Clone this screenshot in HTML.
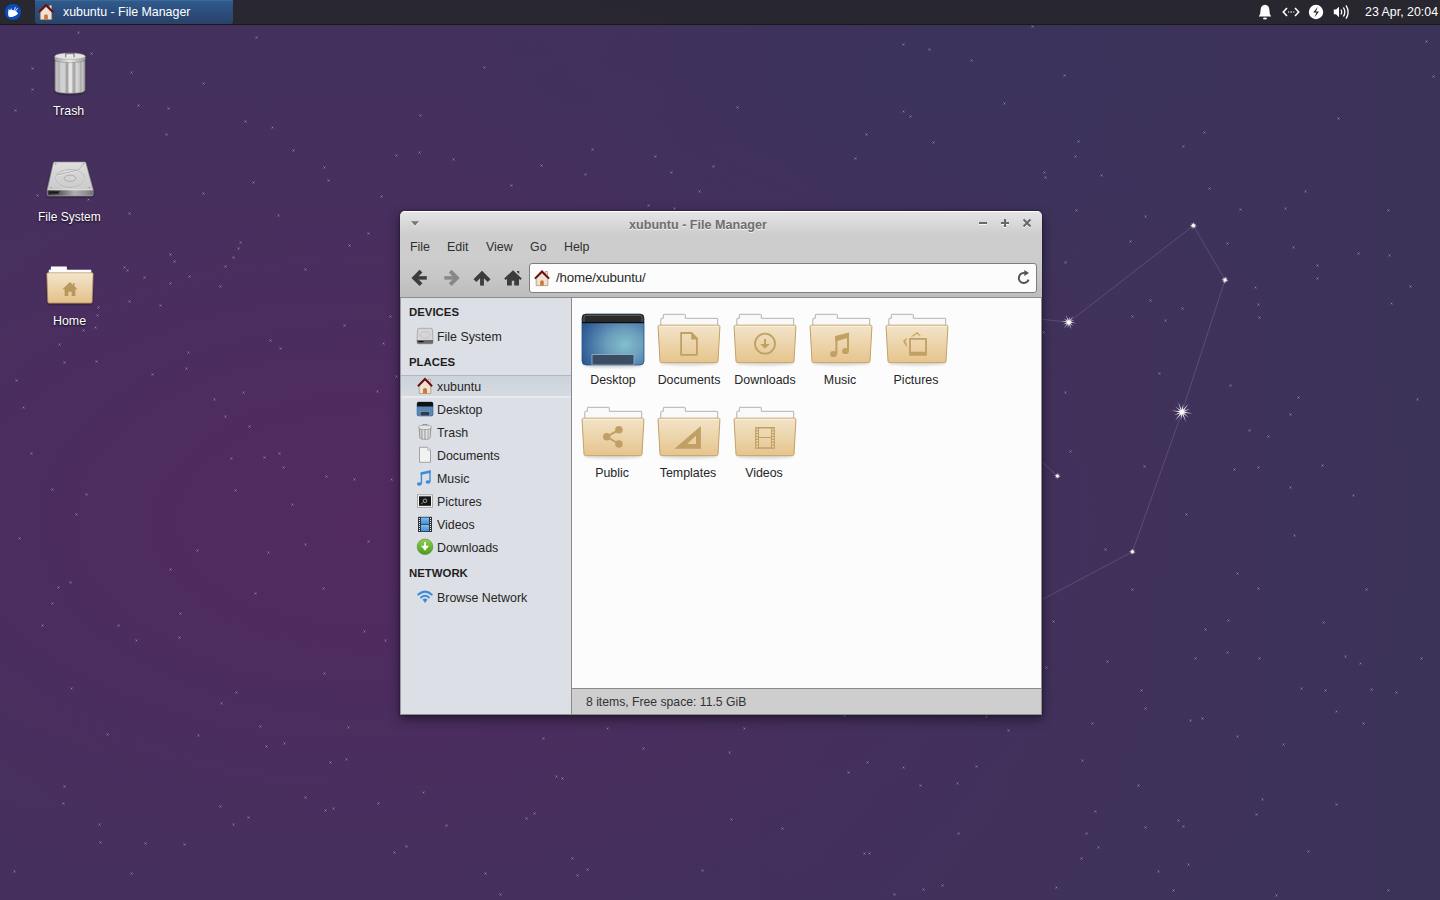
<!DOCTYPE html>
<html><head><meta charset="utf-8">
<style>
*{box-sizing:border-box;margin:0;padding:0}
html,body{width:1440px;height:900px;overflow:hidden}
body{position:relative;font-family:"Liberation Sans",sans-serif;
background:
 radial-gradient(ellipse 470px 300px at 910px 70px, rgba(50,55,95,0.3) 0%, rgba(50,55,95,0.22) 35%, rgba(50,55,95,0.08) 70%, rgba(50,55,95,0) 100%),
 radial-gradient(ellipse 1140px 660px at 380px 520px, rgba(106,32,103,0.360) 0.0%, rgba(106,32,103,0.349) 8.3%, rgba(106,32,103,0.318) 16.7%, rgba(106,32,103,0.272) 25.0%, rgba(106,32,103,0.218) 33.3%, rgba(106,32,103,0.165) 41.7%, rgba(106,32,103,0.117) 50.0%, rgba(106,32,103,0.078) 58.3%, rgba(106,32,103,0.049) 66.7%, rgba(106,32,103,0.029) 75.0%, rgba(106,32,103,0.016) 83.3%, rgba(106,32,103,0.008) 91.7%, rgba(106,32,103,0.000) 100.0%),
 linear-gradient(90deg,#43315d 0%,#41315c 50%,#3c3359 100%);
}
.t{position:absolute;white-space:nowrap;line-height:1}
svg.full{position:absolute;left:0;top:0;width:1440px;height:900px}
#panel{position:absolute;left:0;top:0;width:1440px;height:25px;background:rgba(39,38,45,0.94);border-bottom:1px solid #19181d}
#task{position:absolute;left:35px;top:0;width:198px;height:24px;border-radius:0 0 3px 3px;
 background:linear-gradient(#4a73a0 0px,#2f5b8c 1px,#2c5080 40%,#2a4268 100%)}
.dlabel{position:absolute;color:#fff;font-size:12.4px;line-height:1;white-space:nowrap;text-shadow:0 1px 2px rgba(0,0,0,.9)}
#win{position:absolute;left:400px;top:210px;width:642px;height:505px}
#winbg{position:absolute;left:0;top:1px;width:642px;height:504px;border-radius:5px 5px 0 0;background:#cecece;border:1px solid #8e8e8e;border-top:0;box-shadow:0 0 1px 1px rgba(30,20,40,.35),0 4px 12px rgba(0,0,0,.5)}
#chrome{position:absolute;left:0;top:1px;width:642px;height:87px;border-radius:5px 5px 0 0;
 background:linear-gradient(#ffffff 0px,#ffffff 1px,#e4e4e4 1px,#cdcdcd 24px,#cdcdcd 47px,#c9c9c9 59px,#bdbdbd 86px,#8c8c8c 86px,#8c8c8c 87px)}
#loc{position:absolute;left:129px;top:53px;width:508px;height:30px;background:#fcfcfc;border:1px solid #7e7e7e;border-radius:3px}
#side{position:absolute;left:0;top:88px;width:171px;height:416px;background:#dcdfe5;border-left:1px solid #9a9a9a}
#sel{position:absolute;left:1px;top:165px;width:170px;height:23px;background:linear-gradient(#b3b6bb 0,#b3b6bb 1px,#cdd3db 1px,#d6dbe2 21px,#e8eaee 21px,#e8eaee 23px)}
#vsep{position:absolute;left:171px;top:88px;width:1px;height:416px;background:#8a8a8a}
#content{position:absolute;left:172px;top:88px;width:469px;height:390px;background:#fcfcfc}
#status{position:absolute;left:172px;top:478px;width:469px;height:26px;background:#cecece;border-top:1px solid #8a8a8a}
.sh{position:absolute;font-weight:bold;font-size:11.4px;color:#1e1e1e;line-height:1;white-space:nowrap}
.si{position:absolute;font-size:12.4px;color:#262626;line-height:1;white-space:nowrap}
.fl{position:absolute;font-size:12.4px;color:#262626;line-height:1;white-space:nowrap;text-align:center;width:90px}
.mi{position:absolute;font-size:12.4px;color:#303030;line-height:1;white-space:nowrap}
</style></head><body>
<svg class="full" id="bg" viewBox="0 0 1440 900">
 <g stroke="rgba(215,195,235,0.22)" stroke-width="0.85" fill="none">
  <polyline points="1030,318 1068.7,322.2 1193.4,225.6 1225,280 1182,412 1132.4,551.8 1030,606"/>
  <line x1="1030" y1="451" x2="1057.4" y2="476"/>
 </g>
<path d="M77.0,31.0l3,3m0,-3l-3,3M90.0,52.0l3,3m0,-3l-3,3M31.0,67.0l3,3m0,-3l-3,3M31.0,88.0l3,3m0,-3l-3,3M14.0,109.0l3,3m0,-3l-3,3M130.0,71.0l3,3m0,-3l-3,3M137.0,104.0l3,3m0,-3l-3,3M167.0,107.0l3,3m0,-3l-3,3M202.0,82.0l3,3m0,-3l-3,3M255.0,36.0l3,3m0,-3l-3,3M244.0,120.0l3,3m0,-3l-3,3M271.0,126.0l3,3m0,-3l-3,3M165.0,133.0l3,3m0,-3l-3,3M292.0,149.0l3,3m0,-3l-3,3M323.0,166.0l3,3m0,-3l-3,3M327.0,179.0l3,3m0,-3l-3,3M395.0,154.0l3,3m0,-3l-3,3M252.0,181.0l3,3m0,-3l-3,3M202.0,192.0l3,3m0,-3l-3,3M380.0,195.0l3,3m0,-3l-3,3M36.0,194.0l3,3m0,-3l-3,3M87.0,198.0l3,3m0,-3l-3,3M128.0,212.0l3,3m0,-3l-3,3M277.0,214.0l3,3m0,-3l-3,3M367.0,232.0l3,3m0,-3l-3,3M348.0,244.0l3,3m0,-3l-3,3M239.0,241.0l3,3m0,-3l-3,3M237.0,247.0l3,3m0,-3l-3,3M232.0,256.0l3,3m0,-3l-3,3M169.0,253.0l3,3m0,-3l-3,3M173.0,260.0l3,3m0,-3l-3,3M224.0,265.0l3,3m0,-3l-3,3M304.0,268.0l3,3m0,-3l-3,3M123.0,266.0l3,3m0,-3l-3,3M126.0,269.0l3,3m0,-3l-3,3M143.0,276.0l3,3m0,-3l-3,3M188.0,275.0l3,3m0,-3l-3,3M169.0,282.0l3,3m0,-3l-3,3M219.0,285.0l3,3m0,-3l-3,3M128.0,300.0l3,3m0,-3l-3,3M159.0,304.0l3,3m0,-3l-3,3M97.0,306.0l3,3m0,-3l-3,3M96.0,314.0l3,3m0,-3l-3,3M94.0,326.0l3,3m0,-3l-3,3M82.0,329.0l3,3m0,-3l-3,3M58.0,343.0l3,3m0,-3l-3,3M63.0,361.0l3,3m0,-3l-3,3M95.0,360.0l3,3m0,-3l-3,3M187.0,351.0l3,3m0,-3l-3,3M185.0,367.0l3,3m0,-3l-3,3M151.0,373.0l3,3m0,-3l-3,3M269.0,339.0l3,3m0,-3l-3,3M279.0,347.0l3,3m0,-3l-3,3M343.0,324.0l3,3m0,-3l-3,3M389.0,315.0l3,3m0,-3l-3,3M382.0,342.0l3,3m0,-3l-3,3M395.0,375.0l3,3m0,-3l-3,3M376.0,390.0l3,3m0,-3l-3,3M15.0,379.0l3,3m0,-3l-3,3M22.0,406.0l3,3m0,-3l-3,3M242.0,391.0l3,3m0,-3l-3,3M213.0,398.0l3,3m0,-3l-3,3M224.0,415.0l3,3m0,-3l-3,3M248.0,425.0l3,3m0,-3l-3,3M30.0,452.0l3,3m0,-3l-3,3M230.0,457.0l3,3m0,-3l-3,3M263.0,456.0l3,3m0,-3l-3,3M278.0,452.0l3,3m0,-3l-3,3M282.0,466.0l3,3m0,-3l-3,3M325.0,475.0l3,3m0,-3l-3,3M353.0,478.0l3,3m0,-3l-3,3M390.0,478.0l3,3m0,-3l-3,3M51.0,488.0l3,3m0,-3l-3,3M85.0,493.0l3,3m0,-3l-3,3M234.0,489.0l3,3m0,-3l-3,3M291.0,503.0l3,3m0,-3l-3,3M75.0,513.0l3,3m0,-3l-3,3M18.0,537.0l3,3m0,-3l-3,3M196.0,549.0l3,3m0,-3l-3,3M267.0,551.0l3,3m0,-3l-3,3M304.0,543.0l3,3m0,-3l-3,3M367.0,540.0l3,3m0,-3l-3,3M169.0,568.0l3,3m0,-3l-3,3M69.0,581.0l3,3m0,-3l-3,3M57.0,586.0l3,3m0,-3l-3,3M51.0,602.0l3,3m0,-3l-3,3M254.0,592.0l3,3m0,-3l-3,3M322.0,587.0l3,3m0,-3l-3,3M179.0,612.0l3,3m0,-3l-3,3M41.0,624.0l3,3m0,-3l-3,3M117.0,624.0l3,3m0,-3l-3,3M135.0,639.0l3,3m0,-3l-3,3M178.0,636.0l3,3m0,-3l-3,3M363.0,630.0l3,3m0,-3l-3,3M384.0,639.0l3,3m0,-3l-3,3M323.0,672.0l3,3m0,-3l-3,3M70.0,687.0l3,3m0,-3l-3,3M235.0,691.0l3,3m0,-3l-3,3M220.0,702.0l3,3m0,-3l-3,3M259.0,725.0l3,3m0,-3l-3,3M347.0,726.0l3,3m0,-3l-3,3M106.0,733.0l3,3m0,-3l-3,3M197.0,734.0l3,3m0,-3l-3,3M265.0,745.0l3,3m0,-3l-3,3M283.0,742.0l3,3m0,-3l-3,3M329.0,761.0l3,3m0,-3l-3,3M345.0,758.0l3,3m0,-3l-3,3M63.0,785.0l3,3m0,-3l-3,3M62.0,802.0l3,3m0,-3l-3,3M98.0,823.0l3,3m0,-3l-3,3M99.0,841.0l3,3m0,-3l-3,3M144.0,842.0l3,3m0,-3l-3,3M183.0,843.0l3,3m0,-3l-3,3M219.0,805.0l3,3m0,-3l-3,3M232.0,823.0l3,3m0,-3l-3,3M247.0,816.0l3,3m0,-3l-3,3M304.0,796.0l3,3m0,-3l-3,3M324.0,809.0l3,3m0,-3l-3,3M332.0,807.0l3,3m0,-3l-3,3M377.0,802.0l3,3m0,-3l-3,3M422.0,791.0l3,3m0,-3l-3,3M445.0,824.0l3,3m0,-3l-3,3M393.0,851.0l3,3m0,-3l-3,3M405.0,845.0l3,3m0,-3l-3,3M13.0,870.0l3,3m0,-3l-3,3M130.0,872.0l3,3m0,-3l-3,3M484.0,872.0l3,3m0,-3l-3,3M499.0,893.0l3,3m0,-3l-3,3M542.0,737.0l3,3m0,-3l-3,3M606.0,727.0l3,3m0,-3l-3,3M642.0,747.0l3,3m0,-3l-3,3M743.0,727.0l3,3m0,-3l-3,3M728.0,751.0l3,3m0,-3l-3,3M843.0,714.0l3,3m0,-3l-3,3M985.0,715.0l3,3m0,-3l-3,3M1007.0,729.0l3,3m0,-3l-3,3M555.0,775.0l3,3m0,-3l-3,3M561.0,777.0l3,3m0,-3l-3,3M533.0,812.0l3,3m0,-3l-3,3M525.0,817.0l3,3m0,-3l-3,3M730.0,818.0l3,3m0,-3l-3,3M781.0,827.0l3,3m0,-3l-3,3M847.0,771.0l3,3m0,-3l-3,3M866.0,761.0l3,3m0,-3l-3,3M902.0,766.0l3,3m0,-3l-3,3M919.0,784.0l3,3m0,-3l-3,3M956.0,782.0l3,3m0,-3l-3,3M975.0,765.0l3,3m0,-3l-3,3M957.0,832.0l3,3m0,-3l-3,3M571.0,857.0l3,3m0,-3l-3,3M586.0,868.0l3,3m0,-3l-3,3M576.0,874.0l3,3m0,-3l-3,3M701.0,869.0l3,3m0,-3l-3,3M863.0,852.0l3,3m0,-3l-3,3M868.0,852.0l3,3m0,-3l-3,3M893.0,893.0l3,3m0,-3l-3,3M922.0,888.0l3,3m0,-3l-3,3M941.0,884.0l3,3m0,-3l-3,3M1063.0,74.0l3,3m0,-3l-3,3M1425.0,40.0l3,3m0,-3l-3,3M1432.0,75.0l3,3m0,-3l-3,3M1337.0,117.0l3,3m0,-3l-3,3M1203.0,131.0l3,3m0,-3l-3,3M1182.0,145.0l3,3m0,-3l-3,3M1077.0,140.0l3,3m0,-3l-3,3M1074.0,155.0l3,3m0,-3l-3,3M1043.0,171.0l3,3m0,-3l-3,3M1044.0,176.0l3,3m0,-3l-3,3M1100.0,174.0l3,3m0,-3l-3,3M1208.0,187.0l3,3m0,-3l-3,3M1304.0,190.0l3,3m0,-3l-3,3M1075.0,209.0l3,3m0,-3l-3,3M1144.0,215.0l3,3m0,-3l-3,3M1239.0,208.0l3,3m0,-3l-3,3M1284.0,207.0l3,3m0,-3l-3,3M1387.0,209.0l3,3m0,-3l-3,3M1129.0,240.0l3,3m0,-3l-3,3M1226.0,242.0l3,3m0,-3l-3,3M1292.0,246.0l3,3m0,-3l-3,3M1064.0,261.0l3,3m0,-3l-3,3M1316.0,264.0l3,3m0,-3l-3,3M1357.0,252.0l3,3m0,-3l-3,3M1388.0,254.0l3,3m0,-3l-3,3M1316.0,277.0l3,3m0,-3l-3,3M1254.0,286.0l3,3m0,-3l-3,3M1257.0,303.0l3,3m0,-3l-3,3M1258.0,316.0l3,3m0,-3l-3,3M1409.0,285.0l3,3m0,-3l-3,3M1390.0,302.0l3,3m0,-3l-3,3M1149.0,299.0l3,3m0,-3l-3,3M1181.0,307.0l3,3m0,-3l-3,3M1131.0,315.0l3,3m0,-3l-3,3M1164.0,319.0l3,3m0,-3l-3,3M1042.0,331.0l3,3m0,-3l-3,3M1158.0,372.0l3,3m0,-3l-3,3M1229.0,384.0l3,3m0,-3l-3,3M1064.0,391.0l3,3m0,-3l-3,3M1297.0,396.0l3,3m0,-3l-3,3M1416.0,398.0l3,3m0,-3l-3,3M1289.0,413.0l3,3m0,-3l-3,3M1248.0,429.0l3,3m0,-3l-3,3M1267.0,435.0l3,3m0,-3l-3,3M1069.0,450.0l3,3m0,-3l-3,3M1143.0,465.0l3,3m0,-3l-3,3M1233.0,468.0l3,3m0,-3l-3,3M1257.0,466.0l3,3m0,-3l-3,3M1321.0,464.0l3,3m0,-3l-3,3M1289.0,486.0l3,3m0,-3l-3,3M1352.0,494.0l3,3m0,-3l-3,3M1185.0,513.0l3,3m0,-3l-3,3M1104.0,548.0l3,3m0,-3l-3,3M1293.0,534.0l3,3m0,-3l-3,3M1236.0,572.0l3,3m0,-3l-3,3M1257.0,587.0l3,3m0,-3l-3,3M1365.0,588.0l3,3m0,-3l-3,3M1131.0,588.0l3,3m0,-3l-3,3M1052.0,620.0l3,3m0,-3l-3,3M1227.0,619.0l3,3m0,-3l-3,3M1204.0,628.0l3,3m0,-3l-3,3M1322.0,621.0l3,3m0,-3l-3,3M1106.0,660.0l3,3m0,-3l-3,3M1045.0,666.0l3,3m0,-3l-3,3M1194.0,657.0l3,3m0,-3l-3,3M1226.0,651.0l3,3m0,-3l-3,3M1258.0,657.0l3,3m0,-3l-3,3M1344.0,655.0l3,3m0,-3l-3,3M1359.0,662.0l3,3m0,-3l-3,3M1420.0,657.0l3,3m0,-3l-3,3M1140.0,689.0l3,3m0,-3l-3,3M1300.0,687.0l3,3m0,-3l-3,3M1324.0,689.0l3,3m0,-3l-3,3M1370.0,688.0l3,3m0,-3l-3,3M1395.0,691.0l3,3m0,-3l-3,3M1144.0,707.0l3,3m0,-3l-3,3M1091.0,722.0l3,3m0,-3l-3,3M1189.0,719.0l3,3m0,-3l-3,3M1201.0,717.0l3,3m0,-3l-3,3M1335.0,710.0l3,3m0,-3l-3,3M1362.0,722.0l3,3m0,-3l-3,3M1236.0,735.0l3,3m0,-3l-3,3M1282.0,743.0l3,3m0,-3l-3,3M1081.0,759.0l3,3m0,-3l-3,3M1137.0,784.0l3,3m0,-3l-3,3M1094.0,810.0l3,3m0,-3l-3,3M1177.0,819.0l3,3m0,-3l-3,3M1182.0,825.0l3,3m0,-3l-3,3M1144.0,826.0l3,3m0,-3l-3,3M1085.0,832.0l3,3m0,-3l-3,3M1097.0,846.0l3,3m0,-3l-3,3M1080.0,857.0l3,3m0,-3l-3,3M1261.0,798.0l3,3m0,-3l-3,3M1255.0,813.0l3,3m0,-3l-3,3M1335.0,803.0l3,3m0,-3l-3,3M1307.0,850.0l3,3m0,-3l-3,3M1187.0,863.0l3,3m0,-3l-3,3M1157.0,870.0l3,3m0,-3l-3,3M1055.0,886.0l3,3m0,-3l-3,3M1172.0,889.0l3,3m0,-3l-3,3M1275.0,894.0l3,3m0,-3l-3,3M1387.0,889.0l3,3m0,-3l-3,3M483.0,66.0l3,3m0,-3l-3,3M419.0,114.0l3,3m0,-3l-3,3M418.0,151.0l3,3m0,-3l-3,3M452.0,158.0l3,3m0,-3l-3,3M510.0,184.0l3,3m0,-3l-3,3M540.0,164.0l3,3m0,-3l-3,3M584.0,173.0l3,3m0,-3l-3,3M591.0,148.0l3,3m0,-3l-3,3M654.0,155.0l3,3m0,-3l-3,3M670.0,171.0l3,3m0,-3l-3,3M712.0,165.0l3,3m0,-3l-3,3M698.0,190.0l3,3m0,-3l-3,3M647.0,204.0l3,3m0,-3l-3,3M673.0,207.0l3,3m0,-3l-3,3M736.0,106.0l3,3m0,-3l-3,3M902.0,43.0l3,3m0,-3l-3,3M928.0,48.0l3,3m0,-3l-3,3M970.0,59.0l3,3m0,-3l-3,3M1003.0,102.0l3,3m0,-3l-3,3M902.0,110.0l3,3m0,-3l-3,3M909.0,115.0l3,3m0,-3l-3,3M865.0,133.0l3,3m0,-3l-3,3M932.0,141.0l3,3m0,-3l-3,3M854.0,157.0l3,3m0,-3l-3,3M1031.0,25.0l3,3m0,-3l-3,3" stroke="#a898bd" stroke-width="0.6" fill="none" opacity="0.45"/>
<g fill="#b8aac8" opacity="0.6"><rect x="78.0" y="32.0" width="1" height="1"/><rect x="91.0" y="53.0" width="1" height="1"/><rect x="32.0" y="68.0" width="1" height="1"/><rect x="32.0" y="89.0" width="1" height="1"/><rect x="15.0" y="110.0" width="1" height="1"/><rect x="131.0" y="72.0" width="1" height="1"/><rect x="138.0" y="105.0" width="1" height="1"/><rect x="168.0" y="108.0" width="1" height="1"/><rect x="203.0" y="83.0" width="1" height="1"/><rect x="256.0" y="37.0" width="1" height="1"/><rect x="245.0" y="121.0" width="1" height="1"/><rect x="272.0" y="127.0" width="1" height="1"/><rect x="166.0" y="134.0" width="1" height="1"/><rect x="293.0" y="150.0" width="1" height="1"/><rect x="324.0" y="167.0" width="1" height="1"/><rect x="328.0" y="180.0" width="1" height="1"/><rect x="396.0" y="155.0" width="1" height="1"/><rect x="253.0" y="182.0" width="1" height="1"/><rect x="203.0" y="193.0" width="1" height="1"/><rect x="381.0" y="196.0" width="1" height="1"/><rect x="37.0" y="195.0" width="1" height="1"/><rect x="88.0" y="199.0" width="1" height="1"/><rect x="129.0" y="213.0" width="1" height="1"/><rect x="278.0" y="215.0" width="1" height="1"/><rect x="368.0" y="233.0" width="1" height="1"/><rect x="349.0" y="245.0" width="1" height="1"/><rect x="240.0" y="242.0" width="1" height="1"/><rect x="238.0" y="248.0" width="1" height="1"/><rect x="233.0" y="257.0" width="1" height="1"/><rect x="170.0" y="254.0" width="1" height="1"/><rect x="174.0" y="261.0" width="1" height="1"/><rect x="225.0" y="266.0" width="1" height="1"/><rect x="305.0" y="269.0" width="1" height="1"/><rect x="124.0" y="267.0" width="1" height="1"/><rect x="127.0" y="270.0" width="1" height="1"/><rect x="144.0" y="277.0" width="1" height="1"/><rect x="189.0" y="276.0" width="1" height="1"/><rect x="170.0" y="283.0" width="1" height="1"/><rect x="220.0" y="286.0" width="1" height="1"/><rect x="129.0" y="301.0" width="1" height="1"/><rect x="160.0" y="305.0" width="1" height="1"/><rect x="98.0" y="307.0" width="1" height="1"/><rect x="97.0" y="315.0" width="1" height="1"/><rect x="95.0" y="327.0" width="1" height="1"/><rect x="83.0" y="330.0" width="1" height="1"/><rect x="59.0" y="344.0" width="1" height="1"/><rect x="64.0" y="362.0" width="1" height="1"/><rect x="96.0" y="361.0" width="1" height="1"/><rect x="188.0" y="352.0" width="1" height="1"/><rect x="186.0" y="368.0" width="1" height="1"/><rect x="152.0" y="374.0" width="1" height="1"/><rect x="270.0" y="340.0" width="1" height="1"/><rect x="280.0" y="348.0" width="1" height="1"/><rect x="344.0" y="325.0" width="1" height="1"/><rect x="390.0" y="316.0" width="1" height="1"/><rect x="383.0" y="343.0" width="1" height="1"/><rect x="396.0" y="376.0" width="1" height="1"/><rect x="377.0" y="391.0" width="1" height="1"/><rect x="16.0" y="380.0" width="1" height="1"/><rect x="23.0" y="407.0" width="1" height="1"/><rect x="243.0" y="392.0" width="1" height="1"/><rect x="214.0" y="399.0" width="1" height="1"/><rect x="225.0" y="416.0" width="1" height="1"/><rect x="249.0" y="426.0" width="1" height="1"/><rect x="31.0" y="453.0" width="1" height="1"/><rect x="231.0" y="458.0" width="1" height="1"/><rect x="264.0" y="457.0" width="1" height="1"/><rect x="279.0" y="453.0" width="1" height="1"/><rect x="283.0" y="467.0" width="1" height="1"/><rect x="326.0" y="476.0" width="1" height="1"/><rect x="354.0" y="479.0" width="1" height="1"/><rect x="391.0" y="479.0" width="1" height="1"/><rect x="52.0" y="489.0" width="1" height="1"/><rect x="86.0" y="494.0" width="1" height="1"/><rect x="235.0" y="490.0" width="1" height="1"/><rect x="292.0" y="504.0" width="1" height="1"/><rect x="76.0" y="514.0" width="1" height="1"/><rect x="19.0" y="538.0" width="1" height="1"/><rect x="197.0" y="550.0" width="1" height="1"/><rect x="268.0" y="552.0" width="1" height="1"/><rect x="305.0" y="544.0" width="1" height="1"/><rect x="368.0" y="541.0" width="1" height="1"/><rect x="170.0" y="569.0" width="1" height="1"/><rect x="70.0" y="582.0" width="1" height="1"/><rect x="58.0" y="587.0" width="1" height="1"/><rect x="52.0" y="603.0" width="1" height="1"/><rect x="255.0" y="593.0" width="1" height="1"/><rect x="323.0" y="588.0" width="1" height="1"/><rect x="180.0" y="613.0" width="1" height="1"/><rect x="42.0" y="625.0" width="1" height="1"/><rect x="118.0" y="625.0" width="1" height="1"/><rect x="136.0" y="640.0" width="1" height="1"/><rect x="179.0" y="637.0" width="1" height="1"/><rect x="364.0" y="631.0" width="1" height="1"/><rect x="385.0" y="640.0" width="1" height="1"/><rect x="324.0" y="673.0" width="1" height="1"/><rect x="71.0" y="688.0" width="1" height="1"/><rect x="236.0" y="692.0" width="1" height="1"/><rect x="221.0" y="703.0" width="1" height="1"/><rect x="260.0" y="726.0" width="1" height="1"/><rect x="348.0" y="727.0" width="1" height="1"/><rect x="107.0" y="734.0" width="1" height="1"/><rect x="198.0" y="735.0" width="1" height="1"/><rect x="266.0" y="746.0" width="1" height="1"/><rect x="284.0" y="743.0" width="1" height="1"/><rect x="330.0" y="762.0" width="1" height="1"/><rect x="346.0" y="759.0" width="1" height="1"/><rect x="64.0" y="786.0" width="1" height="1"/><rect x="63.0" y="803.0" width="1" height="1"/><rect x="99.0" y="824.0" width="1" height="1"/><rect x="100.0" y="842.0" width="1" height="1"/><rect x="145.0" y="843.0" width="1" height="1"/><rect x="184.0" y="844.0" width="1" height="1"/><rect x="220.0" y="806.0" width="1" height="1"/><rect x="233.0" y="824.0" width="1" height="1"/><rect x="248.0" y="817.0" width="1" height="1"/><rect x="305.0" y="797.0" width="1" height="1"/><rect x="325.0" y="810.0" width="1" height="1"/><rect x="333.0" y="808.0" width="1" height="1"/><rect x="378.0" y="803.0" width="1" height="1"/><rect x="423.0" y="792.0" width="1" height="1"/><rect x="446.0" y="825.0" width="1" height="1"/><rect x="394.0" y="852.0" width="1" height="1"/><rect x="406.0" y="846.0" width="1" height="1"/><rect x="14.0" y="871.0" width="1" height="1"/><rect x="131.0" y="873.0" width="1" height="1"/><rect x="485.0" y="873.0" width="1" height="1"/><rect x="500.0" y="894.0" width="1" height="1"/><rect x="543.0" y="738.0" width="1" height="1"/><rect x="607.0" y="728.0" width="1" height="1"/><rect x="643.0" y="748.0" width="1" height="1"/><rect x="744.0" y="728.0" width="1" height="1"/><rect x="729.0" y="752.0" width="1" height="1"/><rect x="844.0" y="715.0" width="1" height="1"/><rect x="986.0" y="716.0" width="1" height="1"/><rect x="1008.0" y="730.0" width="1" height="1"/><rect x="556.0" y="776.0" width="1" height="1"/><rect x="562.0" y="778.0" width="1" height="1"/><rect x="534.0" y="813.0" width="1" height="1"/><rect x="526.0" y="818.0" width="1" height="1"/><rect x="731.0" y="819.0" width="1" height="1"/><rect x="782.0" y="828.0" width="1" height="1"/><rect x="848.0" y="772.0" width="1" height="1"/><rect x="867.0" y="762.0" width="1" height="1"/><rect x="903.0" y="767.0" width="1" height="1"/><rect x="920.0" y="785.0" width="1" height="1"/><rect x="957.0" y="783.0" width="1" height="1"/><rect x="976.0" y="766.0" width="1" height="1"/><rect x="958.0" y="833.0" width="1" height="1"/><rect x="572.0" y="858.0" width="1" height="1"/><rect x="587.0" y="869.0" width="1" height="1"/><rect x="577.0" y="875.0" width="1" height="1"/><rect x="702.0" y="870.0" width="1" height="1"/><rect x="864.0" y="853.0" width="1" height="1"/><rect x="869.0" y="853.0" width="1" height="1"/><rect x="894.0" y="894.0" width="1" height="1"/><rect x="923.0" y="889.0" width="1" height="1"/><rect x="942.0" y="885.0" width="1" height="1"/><rect x="1064.0" y="75.0" width="1" height="1"/><rect x="1426.0" y="41.0" width="1" height="1"/><rect x="1433.0" y="76.0" width="1" height="1"/><rect x="1338.0" y="118.0" width="1" height="1"/><rect x="1204.0" y="132.0" width="1" height="1"/><rect x="1183.0" y="146.0" width="1" height="1"/><rect x="1078.0" y="141.0" width="1" height="1"/><rect x="1075.0" y="156.0" width="1" height="1"/><rect x="1044.0" y="172.0" width="1" height="1"/><rect x="1045.0" y="177.0" width="1" height="1"/><rect x="1101.0" y="175.0" width="1" height="1"/><rect x="1209.0" y="188.0" width="1" height="1"/><rect x="1305.0" y="191.0" width="1" height="1"/><rect x="1076.0" y="210.0" width="1" height="1"/><rect x="1145.0" y="216.0" width="1" height="1"/><rect x="1240.0" y="209.0" width="1" height="1"/><rect x="1285.0" y="208.0" width="1" height="1"/><rect x="1388.0" y="210.0" width="1" height="1"/><rect x="1130.0" y="241.0" width="1" height="1"/><rect x="1227.0" y="243.0" width="1" height="1"/><rect x="1293.0" y="247.0" width="1" height="1"/><rect x="1065.0" y="262.0" width="1" height="1"/><rect x="1317.0" y="265.0" width="1" height="1"/><rect x="1358.0" y="253.0" width="1" height="1"/><rect x="1389.0" y="255.0" width="1" height="1"/><rect x="1317.0" y="278.0" width="1" height="1"/><rect x="1255.0" y="287.0" width="1" height="1"/><rect x="1258.0" y="304.0" width="1" height="1"/><rect x="1259.0" y="317.0" width="1" height="1"/><rect x="1410.0" y="286.0" width="1" height="1"/><rect x="1391.0" y="303.0" width="1" height="1"/><rect x="1150.0" y="300.0" width="1" height="1"/><rect x="1182.0" y="308.0" width="1" height="1"/><rect x="1132.0" y="316.0" width="1" height="1"/><rect x="1165.0" y="320.0" width="1" height="1"/><rect x="1043.0" y="332.0" width="1" height="1"/><rect x="1159.0" y="373.0" width="1" height="1"/><rect x="1230.0" y="385.0" width="1" height="1"/><rect x="1065.0" y="392.0" width="1" height="1"/><rect x="1298.0" y="397.0" width="1" height="1"/><rect x="1417.0" y="399.0" width="1" height="1"/><rect x="1290.0" y="414.0" width="1" height="1"/><rect x="1249.0" y="430.0" width="1" height="1"/><rect x="1268.0" y="436.0" width="1" height="1"/><rect x="1070.0" y="451.0" width="1" height="1"/><rect x="1144.0" y="466.0" width="1" height="1"/><rect x="1234.0" y="469.0" width="1" height="1"/><rect x="1258.0" y="467.0" width="1" height="1"/><rect x="1322.0" y="465.0" width="1" height="1"/><rect x="1290.0" y="487.0" width="1" height="1"/><rect x="1353.0" y="495.0" width="1" height="1"/><rect x="1186.0" y="514.0" width="1" height="1"/><rect x="1105.0" y="549.0" width="1" height="1"/><rect x="1294.0" y="535.0" width="1" height="1"/><rect x="1237.0" y="573.0" width="1" height="1"/><rect x="1258.0" y="588.0" width="1" height="1"/><rect x="1366.0" y="589.0" width="1" height="1"/><rect x="1132.0" y="589.0" width="1" height="1"/><rect x="1053.0" y="621.0" width="1" height="1"/><rect x="1228.0" y="620.0" width="1" height="1"/><rect x="1205.0" y="629.0" width="1" height="1"/><rect x="1323.0" y="622.0" width="1" height="1"/><rect x="1107.0" y="661.0" width="1" height="1"/><rect x="1046.0" y="667.0" width="1" height="1"/><rect x="1195.0" y="658.0" width="1" height="1"/><rect x="1227.0" y="652.0" width="1" height="1"/><rect x="1259.0" y="658.0" width="1" height="1"/><rect x="1345.0" y="656.0" width="1" height="1"/><rect x="1360.0" y="663.0" width="1" height="1"/><rect x="1421.0" y="658.0" width="1" height="1"/><rect x="1141.0" y="690.0" width="1" height="1"/><rect x="1301.0" y="688.0" width="1" height="1"/><rect x="1325.0" y="690.0" width="1" height="1"/><rect x="1371.0" y="689.0" width="1" height="1"/><rect x="1396.0" y="692.0" width="1" height="1"/><rect x="1145.0" y="708.0" width="1" height="1"/><rect x="1092.0" y="723.0" width="1" height="1"/><rect x="1190.0" y="720.0" width="1" height="1"/><rect x="1202.0" y="718.0" width="1" height="1"/><rect x="1336.0" y="711.0" width="1" height="1"/><rect x="1363.0" y="723.0" width="1" height="1"/><rect x="1237.0" y="736.0" width="1" height="1"/><rect x="1283.0" y="744.0" width="1" height="1"/><rect x="1082.0" y="760.0" width="1" height="1"/><rect x="1138.0" y="785.0" width="1" height="1"/><rect x="1095.0" y="811.0" width="1" height="1"/><rect x="1178.0" y="820.0" width="1" height="1"/><rect x="1183.0" y="826.0" width="1" height="1"/><rect x="1145.0" y="827.0" width="1" height="1"/><rect x="1086.0" y="833.0" width="1" height="1"/><rect x="1098.0" y="847.0" width="1" height="1"/><rect x="1081.0" y="858.0" width="1" height="1"/><rect x="1262.0" y="799.0" width="1" height="1"/><rect x="1256.0" y="814.0" width="1" height="1"/><rect x="1336.0" y="804.0" width="1" height="1"/><rect x="1308.0" y="851.0" width="1" height="1"/><rect x="1188.0" y="864.0" width="1" height="1"/><rect x="1158.0" y="871.0" width="1" height="1"/><rect x="1056.0" y="887.0" width="1" height="1"/><rect x="1173.0" y="890.0" width="1" height="1"/><rect x="1276.0" y="895.0" width="1" height="1"/><rect x="1388.0" y="890.0" width="1" height="1"/><rect x="484.0" y="67.0" width="1" height="1"/><rect x="420.0" y="115.0" width="1" height="1"/><rect x="419.0" y="152.0" width="1" height="1"/><rect x="453.0" y="159.0" width="1" height="1"/><rect x="511.0" y="185.0" width="1" height="1"/><rect x="541.0" y="165.0" width="1" height="1"/><rect x="585.0" y="174.0" width="1" height="1"/><rect x="592.0" y="149.0" width="1" height="1"/><rect x="655.0" y="156.0" width="1" height="1"/><rect x="671.0" y="172.0" width="1" height="1"/><rect x="713.0" y="166.0" width="1" height="1"/><rect x="699.0" y="191.0" width="1" height="1"/><rect x="648.0" y="205.0" width="1" height="1"/><rect x="674.0" y="208.0" width="1" height="1"/><rect x="737.0" y="107.0" width="1" height="1"/><rect x="903.0" y="44.0" width="1" height="1"/><rect x="929.0" y="49.0" width="1" height="1"/><rect x="971.0" y="60.0" width="1" height="1"/><rect x="1004.0" y="103.0" width="1" height="1"/><rect x="903.0" y="111.0" width="1" height="1"/><rect x="910.0" y="116.0" width="1" height="1"/><rect x="866.0" y="134.0" width="1" height="1"/><rect x="933.0" y="142.0" width="1" height="1"/><rect x="855.0" y="158.0" width="1" height="1"/><rect x="1032.0" y="26.0" width="1" height="1"/></g>
<g transform="translate(1182,412)">
<circle r="3.61" fill="rgba(255,255,255,0.22)"/>
<path d="M-0.11,0.74 L10.68,1.61 L0.11,-0.74 Z" fill="rgba(255,255,255,0.9)"/>
<path d="M-0.47,0.59 L6.75,5.39 L0.47,-0.59 Z" fill="rgba(255,255,255,0.9)"/>
<path d="M-0.70,0.27 L3.94,10.06 L0.70,-0.27 Z" fill="rgba(255,255,255,0.9)"/>
<path d="M-0.74,-0.11 L-1.29,8.54 L0.74,0.11 Z" fill="rgba(255,255,255,0.9)"/>
<path d="M-0.59,-0.47 L-6.74,8.44 L0.59,0.47 Z" fill="rgba(255,255,255,0.9)"/>
<path d="M-0.27,-0.70 L-8.04,3.15 L0.27,0.70 Z" fill="rgba(255,255,255,0.9)"/>
<path d="M0.11,-0.74 L-10.68,-1.61 L-0.11,0.74 Z" fill="rgba(255,255,255,0.9)"/>
<path d="M0.47,-0.59 L-6.75,-5.39 L-0.47,0.59 Z" fill="rgba(255,255,255,0.9)"/>
<path d="M0.70,-0.27 L-3.94,-10.06 L-0.70,0.27 Z" fill="rgba(255,255,255,0.9)"/>
<path d="M0.74,0.11 L1.29,-8.54 L-0.74,-0.11 Z" fill="rgba(255,255,255,0.9)"/>
<path d="M0.59,0.47 L6.74,-8.44 L-0.59,-0.47 Z" fill="rgba(255,255,255,0.9)"/>
<path d="M0.27,0.70 L8.04,-3.15 L-0.27,-0.70 Z" fill="rgba(255,255,255,0.9)"/>
<circle r="1.90" fill="#fff"/>
</g>
<g transform="translate(1068.7,322.2)">
<circle r="3.04" fill="rgba(255,255,255,0.22)"/>
<path d="M-0.10,0.64 L7.51,1.14 L0.10,-0.64 Z" fill="rgba(255,255,255,0.9)"/>
<path d="M-0.41,0.51 L4.75,3.79 L0.41,-0.51 Z" fill="rgba(255,255,255,0.9)"/>
<path d="M-0.61,0.24 L2.77,7.08 L0.61,-0.24 Z" fill="rgba(255,255,255,0.9)"/>
<path d="M-0.64,-0.10 L-0.91,6.01 L0.64,0.10 Z" fill="rgba(255,255,255,0.9)"/>
<path d="M-0.51,-0.41 L-4.74,5.94 L0.51,0.41 Z" fill="rgba(255,255,255,0.9)"/>
<path d="M-0.24,-0.61 L-5.66,2.22 L0.24,0.61 Z" fill="rgba(255,255,255,0.9)"/>
<path d="M0.10,-0.64 L-7.51,-1.14 L-0.10,0.64 Z" fill="rgba(255,255,255,0.9)"/>
<path d="M0.41,-0.51 L-4.75,-3.79 L-0.41,0.51 Z" fill="rgba(255,255,255,0.9)"/>
<path d="M0.61,-0.24 L-2.77,-7.08 L-0.61,0.24 Z" fill="rgba(255,255,255,0.9)"/>
<path d="M0.64,0.10 L0.91,-6.01 L-0.64,-0.10 Z" fill="rgba(255,255,255,0.9)"/>
<path d="M0.51,0.41 L4.74,-5.94 L-0.51,-0.41 Z" fill="rgba(255,255,255,0.9)"/>
<path d="M0.24,0.61 L5.66,-2.22 L-0.24,-0.61 Z" fill="rgba(255,255,255,0.9)"/>
<circle r="1.60" fill="#fff"/>
</g>
<g transform="translate(1193.4,225.6)">
<circle r="2.66" fill="rgba(255,255,255,0.22)"/>
<path d="M-0.09,0.59 L3.96,0.60 L0.09,-0.59 Z" fill="rgba(255,255,255,0.9)"/>
<path d="M-0.48,0.36 L1.90,2.58 L0.48,-0.36 Z" fill="rgba(255,255,255,0.9)"/>
<path d="M-0.59,-0.09 L-0.60,3.96 L0.59,0.09 Z" fill="rgba(255,255,255,0.9)"/>
<path d="M-0.36,-0.48 L-2.58,1.90 L0.36,0.48 Z" fill="rgba(255,255,255,0.9)"/>
<path d="M0.09,-0.59 L-3.96,-0.60 L-0.09,0.59 Z" fill="rgba(255,255,255,0.9)"/>
<path d="M0.48,-0.36 L-1.90,-2.58 L-0.48,0.36 Z" fill="rgba(255,255,255,0.9)"/>
<path d="M0.59,0.09 L0.60,-3.96 L-0.59,-0.09 Z" fill="rgba(255,255,255,0.9)"/>
<path d="M0.36,0.48 L2.58,-1.90 L-0.36,-0.48 Z" fill="rgba(255,255,255,0.9)"/>
<circle r="1.40" fill="#fff"/>
</g>
<g transform="translate(1225,280)">
<circle r="2.66" fill="rgba(255,255,255,0.22)"/>
<path d="M-0.09,0.59 L3.96,0.60 L0.09,-0.59 Z" fill="rgba(255,255,255,0.9)"/>
<path d="M-0.48,0.36 L1.90,2.58 L0.48,-0.36 Z" fill="rgba(255,255,255,0.9)"/>
<path d="M-0.59,-0.09 L-0.60,3.96 L0.59,0.09 Z" fill="rgba(255,255,255,0.9)"/>
<path d="M-0.36,-0.48 L-2.58,1.90 L0.36,0.48 Z" fill="rgba(255,255,255,0.9)"/>
<path d="M0.09,-0.59 L-3.96,-0.60 L-0.09,0.59 Z" fill="rgba(255,255,255,0.9)"/>
<path d="M0.48,-0.36 L-1.90,-2.58 L-0.48,0.36 Z" fill="rgba(255,255,255,0.9)"/>
<path d="M0.59,0.09 L0.60,-3.96 L-0.59,-0.09 Z" fill="rgba(255,255,255,0.9)"/>
<path d="M0.36,0.48 L2.58,-1.90 L-0.36,-0.48 Z" fill="rgba(255,255,255,0.9)"/>
<circle r="1.40" fill="#fff"/>
</g>
<g transform="translate(1057.4,476)">
<circle r="2.28" fill="rgba(255,255,255,0.22)"/>
<path d="M-0.08,0.54 L3.56,0.54 L0.08,-0.54 Z" fill="rgba(255,255,255,0.9)"/>
<path d="M-0.44,0.33 L1.71,2.32 L0.44,-0.33 Z" fill="rgba(255,255,255,0.9)"/>
<path d="M-0.54,-0.08 L-0.54,3.56 L0.54,0.08 Z" fill="rgba(255,255,255,0.9)"/>
<path d="M-0.33,-0.44 L-2.32,1.71 L0.33,0.44 Z" fill="rgba(255,255,255,0.9)"/>
<path d="M0.08,-0.54 L-3.56,-0.54 L-0.08,0.54 Z" fill="rgba(255,255,255,0.9)"/>
<path d="M0.44,-0.33 L-1.71,-2.32 L-0.44,0.33 Z" fill="rgba(255,255,255,0.9)"/>
<path d="M0.54,0.08 L0.54,-3.56 L-0.54,-0.08 Z" fill="rgba(255,255,255,0.9)"/>
<path d="M0.33,0.44 L2.32,-1.71 L-0.33,-0.44 Z" fill="rgba(255,255,255,0.9)"/>
<circle r="1.20" fill="#fff"/>
</g>
<g transform="translate(1132.4,551.8)">
<circle r="2.28" fill="rgba(255,255,255,0.22)"/>
<path d="M-0.08,0.54 L3.56,0.54 L0.08,-0.54 Z" fill="rgba(255,255,255,0.9)"/>
<path d="M-0.44,0.33 L1.71,2.32 L0.44,-0.33 Z" fill="rgba(255,255,255,0.9)"/>
<path d="M-0.54,-0.08 L-0.54,3.56 L0.54,0.08 Z" fill="rgba(255,255,255,0.9)"/>
<path d="M-0.33,-0.44 L-2.32,1.71 L0.33,0.44 Z" fill="rgba(255,255,255,0.9)"/>
<path d="M0.08,-0.54 L-3.56,-0.54 L-0.08,0.54 Z" fill="rgba(255,255,255,0.9)"/>
<path d="M0.44,-0.33 L-1.71,-2.32 L-0.44,0.33 Z" fill="rgba(255,255,255,0.9)"/>
<path d="M0.54,0.08 L0.54,-3.56 L-0.54,-0.08 Z" fill="rgba(255,255,255,0.9)"/>
<path d="M0.33,0.44 L2.32,-1.71 L-0.33,-0.44 Z" fill="rgba(255,255,255,0.9)"/>
<circle r="1.20" fill="#fff"/>
</g>
</svg>

<div id="panel">
  <div id="task"></div>
  <div class="t" style="left:63px;top:6px;font-size:12.4px;color:#fff">xubuntu - File Manager</div>
  <div class="t" style="left:1365px;top:6px;font-size:12.4px;color:#fff">23 Apr, 20:04</div>
</div>

<div class="dlabel" style="left:53px;top:105px">Trash</div>
<div class="dlabel" style="left:38px;top:210.5px;font-size:12px">File System</div>
<div class="dlabel" style="left:53px;top:315px">Home</div>

<div id="win">
  <div id="winbg"></div>
  <div id="chrome"></div>
  <div class="t" style="left:229px;top:9px;font-size:12.6px;font-weight:bold;color:#6e6e6e;text-shadow:0 1px 0 rgba(255,255,255,.7)">xubuntu - File Manager</div>
  <div class="mi" style="left:10px;top:31px">File</div>
  <div class="mi" style="left:47px;top:31px">Edit</div>
  <div class="mi" style="left:86px;top:31px">View</div>
  <div class="mi" style="left:130px;top:31px">Go</div>
  <div class="mi" style="left:164px;top:31px">Help</div>
  <div id="loc"></div>
  <div class="t" style="left:156px;top:61px;font-size:13.3px;letter-spacing:-0.15px;color:#2a2a2a">/home/xubuntu/</div>
  <div id="side"></div>
  <div id="sel"></div>
  <div id="vsep"></div>
  <div id="content"></div>
  <div id="status"></div>
  <div class="t" style="left:186px;top:486px;font-size:12.2px;color:#333333">8 items, Free space: 11.5 GiB</div>

  <div class="sh" style="left:9px;top:97px">DEVICES</div>
  <div class="si" style="left:37px;top:121px">File System</div>
  <div class="sh" style="left:9px;top:147px">PLACES</div>
  <div class="si" style="left:37px;top:171px">xubuntu</div>
  <div class="si" style="left:37px;top:194px">Desktop</div>
  <div class="si" style="left:37px;top:217px">Trash</div>
  <div class="si" style="left:37px;top:240px">Documents</div>
  <div class="si" style="left:37px;top:263px">Music</div>
  <div class="si" style="left:37px;top:286px">Pictures</div>
  <div class="si" style="left:37px;top:309px">Videos</div>
  <div class="si" style="left:37px;top:332px">Downloads</div>
  <div class="sh" style="left:9px;top:358px">NETWORK</div>
  <div class="si" style="left:37px;top:382px">Browse Network</div>

  <div class="fl" style="left:168px;top:164px">Desktop</div>
  <div class="fl" style="left:244px;top:164px">Documents</div>
  <div class="fl" style="left:320px;top:164px">Downloads</div>
  <div class="fl" style="left:395px;top:164px">Music</div>
  <div class="fl" style="left:471px;top:164px">Pictures</div>
  <div class="fl" style="left:167px;top:257px">Public</div>
  <div class="fl" style="left:243px;top:257px">Templates</div>
  <div class="fl" style="left:319px;top:257px">Videos</div>
</div>

<svg class="full" id="icons" viewBox="0 0 1440 900"><defs>
 <linearGradient id="trashbody" x1="0" y1="0" x2="1" y2="0">
  <stop offset="0" stop-color="#8d8d8d"/><stop offset="0.12" stop-color="#cfcfcf"/><stop offset="0.25" stop-color="#a9a9a9"/>
  <stop offset="0.38" stop-color="#e2e2e2"/><stop offset="0.5" stop-color="#a3a3a3"/><stop offset="0.62" stop-color="#e6e6e6"/>
  <stop offset="0.75" stop-color="#b5b5b5"/><stop offset="0.88" stop-color="#d5d5d5"/><stop offset="1" stop-color="#8a8a8a"/>
 </linearGradient>
 <linearGradient id="trashlid" x1="0" y1="0" x2="0" y2="1">
  <stop offset="0" stop-color="#f0f0f0"/><stop offset="0.6" stop-color="#d8d8d8"/><stop offset="1" stop-color="#a8a8a8"/>
 </linearGradient>
 <linearGradient id="hddtop" x1="0" y1="0" x2="0" y2="1">
  <stop offset="0" stop-color="#dcdcdc"/><stop offset="1" stop-color="#c4c4c4"/>
 </linearGradient>
 <linearGradient id="hddfront" x1="0" y1="0" x2="1" y2="0">
  <stop offset="0" stop-color="#5a5a5a"/><stop offset="0.4" stop-color="#9a9a9a"/><stop offset="1" stop-color="#6a6a6a"/>
 </linearGradient>
 <linearGradient id="sbody" x1="0" y1="0" x2="0" y2="1">
  <stop offset="0" stop-color="#f3e6cc"/><stop offset="1" stop-color="#e4c089"/>
 </linearGradient>
 <linearGradient id="greenc" x1="0" y1="0" x2="0" y2="1">
  <stop offset="0" stop-color="#8fd14f"/><stop offset="1" stop-color="#4a9a1e"/>
 </linearGradient>
 <linearGradient id="bluef" x1="0" y1="0" x2="0" y2="1">
  <stop offset="0" stop-color="#7fbef5"/><stop offset="1" stop-color="#3d8fe0"/>
 </linearGradient>
 <filter id="dsh" x="-30%" y="-30%" width="160%" height="160%"><feDropShadow dx="0" dy="1" stdDeviation="1" flood-color="#000" flood-opacity="0.5"/></filter>
</defs>

<!-- Desktop: Trash -->
<defs>
 <linearGradient id="tb2" x1="55" y1="0" x2="85" y2="0" gradientUnits="userSpaceOnUse">
  <stop offset="0" stop-color="#9a9a9a"/><stop offset="0.06" stop-color="#c8c8c8"/>
  <stop offset="0.12" stop-color="#b0b0b0"/><stop offset="0.2" stop-color="#cfcfcf"/>
  <stop offset="0.33" stop-color="#d2d2d2"/><stop offset="0.37" stop-color="#a6a6a6"/><stop offset="0.42" stop-color="#a6a6a6"/>
  <stop offset="0.48" stop-color="#e6e6e6"/><stop offset="0.56" stop-color="#e2e2e2"/>
  <stop offset="0.6" stop-color="#a8a8a8"/><stop offset="0.65" stop-color="#a8a8a8"/>
  <stop offset="0.72" stop-color="#d8d8d8"/><stop offset="0.82" stop-color="#c4c4c4"/><stop offset="0.86" stop-color="#a8a8a8"/>
  <stop offset="0.92" stop-color="#c6c6c6"/><stop offset="1" stop-color="#8e8e8e"/>
 </linearGradient>
 <linearGradient id="trim" x1="0" y1="0" x2="1" y2="0">
  <stop offset="0" stop-color="#a0a0a0"/><stop offset="0.5" stop-color="#e8e8e8"/><stop offset="1" stop-color="#9a9a9a"/>
 </linearGradient>
</defs>
<g filter="url(#dsh)">
 <path d="M55,61 V90 Q55,93.2 70,93.2 Q85,93.2 85,90 V61 Z" fill="url(#tb2)" stroke="#858585" stroke-width="0.5"/>
 <path d="M54.8,56.2 V59.6 Q54.8,62.6 70,62.6 Q85.2,62.6 85.2,59.6 V56.2 Z" fill="url(#trim)" stroke="#8a8a8a" stroke-width="0.5"/>
 <ellipse cx="70" cy="56.2" rx="15.2" ry="3.2" fill="#e4e4e4" stroke="#9a9a9a" stroke-width="0.5"/>
 <path d="M65.8,57.2 V53.7 H74 V57.2" fill="none" stroke="#7e7e7e" stroke-width="1.2"/>
 <path d="M67.3,57.3 V55.2 H72.5 V57.3" fill="none" stroke="#f4f4f4" stroke-width="0.9"/>
</g>
<!-- Desktop: File System HDD -->
<defs>
 <linearGradient id="hddf2" x1="47" y1="0" x2="93" y2="0" gradientUnits="userSpaceOnUse">
  <stop offset="0" stop-color="#3a3a3a"/><stop offset="0.25" stop-color="#5a5a5a"/><stop offset="0.6" stop-color="#b0b0b0"/><stop offset="0.9" stop-color="#8a8a8a"/><stop offset="1" stop-color="#6a6a6a"/>
 </linearGradient>
 <linearGradient id="hddt2" x1="0" y1="162" x2="0" y2="190" gradientUnits="userSpaceOnUse">
  <stop offset="0" stop-color="#dedede"/><stop offset="1" stop-color="#cacaca"/>
 </linearGradient>
</defs>
<g filter="url(#dsh)">
 <path d="M54.6,162 H84.6 Q85.6,162 85.9,163 L93.1,189.6 V194.6 Q93.1,195.8 91.9,195.8 H48.5 Q47.3,195.8 47.3,194.6 V189.6 L53.3,163 Q53.6,162 54.6,162 Z" fill="url(#hddt2)" stroke="#8c8c8c" stroke-width="0.6"/>
 <path d="M47.6,189.8 H92.8 V194.6 Q92.8,195.5 91.9,195.5 H48.5 Q47.6,195.5 47.6,194.6 Z" fill="url(#hddf2)"/>
 <line x1="47.6" y1="189.8" x2="92.8" y2="189.8" stroke="#f2f2f2" stroke-width="0.8"/>
 <path d="M49,191.2 H60 L58,193.8 H49 Z" fill="#151515" opacity="0.85"/>
 <ellipse cx="70" cy="178.6" rx="14.8" ry="9" fill="none" stroke="#a8a8a8" stroke-width="0.8"/>
 <ellipse cx="70" cy="179.4" rx="14.8" ry="9" fill="none" stroke="#eeeeee" stroke-width="0.6" opacity="0.7"/>
 <ellipse cx="70" cy="178.2" rx="5.8" ry="3.1" fill="#d4d4d4" stroke="#9c9c9c" stroke-width="0.7"/>
 <path d="M82,164.8 Q82.5,168.5 76,170.5 Q64,173.5 57,175" fill="none" stroke="#a6a6a6" stroke-width="0.8"/>
 <path d="M82.8,165.2 Q83.2,169.2 76.4,171.3 Q64.4,174.3 57.4,175.8" fill="none" stroke="#f0f0f0" stroke-width="0.6" opacity="0.8"/>
 <g fill="#8a8a8a"><circle cx="55.8" cy="164" r="0.7"/><circle cx="83.6" cy="164" r="0.7"/><circle cx="51" cy="187.6" r="0.7"/><circle cx="89.4" cy="187.6" r="0.7"/></g>
</g>
<!-- Desktop: Home folder -->
<g filter="url(#dsh)">
 <path d="M48.8,276 V270 Q48.8,269.7 49.2,269.7 H50.9 V267 Q50.9,266.6 51.3,266.6 H66.5 Q66.9,266.6 66.9,267 V269.7 H90.9 Q91.3,269.7 91.3,270 V276 Z" fill="#fbfbfb"/>
 <path d="M48,272.8 H92 Q93.1,272.8 93.1,274 L92.1,301.8 Q92.1,303 90.9,303 H49.1 Q47.9,303 47.9,301.8 L46.9,274 Q46.9,272.8 48,272.8 Z" fill="url(#sbody)" stroke="#b99660" stroke-width="0.7"/>
 <path d="M70,282 L62.4,289.2 H64.6 V296 H68.3 V291.8 H71.7 V296 H75.4 V289.2 H77.6 L74.5,286.3 V283 H73 V284.9 Z" fill="#b8985e"/>
</g>
<defs>
 <linearGradient id="fbody" x1="0" y1="0" x2="0" y2="1">
  <stop offset="0" stop-color="#f2e4c9"/><stop offset="1" stop-color="#e6c48d"/>
 </linearGradient>
 <radialGradient id="deskg" cx="0.69" cy="0.6" r="0.75">
  <stop offset="0" stop-color="#82bfcb"/><stop offset="0.4" stop-color="#6a9dbb"/><stop offset="0.75" stop-color="#4573a5"/><stop offset="1" stop-color="#2b5890"/>
 </radialGradient>
 <filter id="blur1" x="-20%" y="-50%" width="140%" height="200%"><feGaussianBlur stdDeviation="1.2"/></filter>
 <symbol id="folder" overflow="visible">
  <ellipse cx="31" cy="49.5" rx="29" ry="2.2" fill="rgba(0,0,0,0.13)" filter="url(#blur1)"/>
  <path d="M2.8,13 V5 Q2.8,4.3 3.5,4.3 H5.3 V1 Q5.3,0.3 6,0.3 H26.6 Q27.3,0.3 27.3,1 V4.3 H59 Q59.7,4.3 59.7,5 V13 Z" fill="#f9f9f9" stroke="#b0b2ba" stroke-width="1"/>
  <path d="M1.6,11.2 H60.4 Q62,11.2 61.9,12.8 L60,47.1 Q59.9,48.7 58.3,48.7 H3.7 Q2.1,48.7 2,47.1 L0.1,12.8 Q0,11.2 1.6,11.2 Z" fill="url(#fbody)" stroke="#c4a167" stroke-width="1"/>
  <line x1="1.2" y1="12.3" x2="60.8" y2="12.3" stroke="#fbf2e2" stroke-width="1"/>
 </symbol>
</defs>
<!-- content folders -->
<use href="#folder" x="658" y="314"/>
<use href="#folder" x="734" y="314"/>
<use href="#folder" x="810" y="314"/>
<use href="#folder" x="886" y="314"/>
<use href="#folder" x="582" y="407"/>
<use href="#folder" x="658" y="407"/>
<use href="#folder" x="734" y="407"/>
<g fill="#c0a063" stroke="none">
 <!-- Documents -->
 <g transform="translate(658,314)">
  <path d="M23.1,19 H33.5 L38.9,24.4 V40.8 H23.1 Z" fill="none" stroke="#c0a063" stroke-width="1.8" stroke-linejoin="round"/>
  <path d="M33.2,18.2 L39.8,24.8 V25.4 H33.2 Z"/>
 </g>
 <!-- Downloads -->
 <g transform="translate(734,314)">
  <circle cx="31" cy="29.7" r="10" fill="none" stroke="#c0a063" stroke-width="1.8"/>
  <rect x="30" y="25" width="2" height="6"/>
  <path d="M26.1,30.1 H35.9 L31,34.8 Z"/>
 </g>
 <!-- Music -->
 <g transform="translate(810,314)">
  <ellipse cx="23.5" cy="40" rx="3.4" ry="3.1"/>
  <ellipse cx="35.5" cy="37" rx="3.4" ry="3.1"/>
  <rect x="25.4" y="22" width="2" height="18"/>
  <rect x="37" y="19" width="2" height="18"/>
  <path d="M25.4,22 L39,18.6 V23.6 L25.4,27.4 Z"/>
 </g>
 <!-- Pictures -->
 <g transform="translate(886,314)">
  <path fill-rule="evenodd" d="M23.1,23.9 H40.9 V41.7 H23.1 Z M24.9,25.7 V37.7 H39.1 V25.7 Z"/>
  <path d="M24.8,22.4 L31.3,17.9 L34.8,21.9 L33,21.6 L31.1,19.8 L26.5,22.5 Z"/>
  <path d="M20.9,23.9 L17,27 L20.8,33.5 L20.6,29.5 L19,27.2 L20.9,25.4 Z"/>
 </g>
 <!-- Public -->
 <g transform="translate(582,407)">
  <circle cx="24.7" cy="29.7" r="3.7"/>
  <circle cx="36.9" cy="22.8" r="3.8"/>
  <circle cx="36.9" cy="37" r="3.8"/>
  <path d="M24.7,29.7 L36.9,22.8 M24.7,29.7 L36.9,37" stroke="#c0a063" stroke-width="1.9"/>
 </g>
 <!-- Templates -->
 <g transform="translate(658,407)">
  <path fill-rule="evenodd" d="M16.4,41.7 L42.9,19 V41.7 Z M29.1,37 L38,28.8 V37 Z"/>
 </g>
 <!-- Videos -->
 <g transform="translate(734,407)">
  <path fill-rule="evenodd" d="M21.1,20.1 H40.9 V41.7 H21.1 Z M25,21.5 V30 H37 V21.5 Z M25,31 V40.3 H37 V31 Z"/>
 </g>
 <g fill="#eed9b3">
  <rect x="756.2" y="428.60" width="1.8" height="1.6"/>
<rect x="772.0" y="428.60" width="1.8" height="1.6"/>
<rect x="756.2" y="431.45" width="1.8" height="1.6"/>
<rect x="772.0" y="431.45" width="1.8" height="1.6"/>
<rect x="756.2" y="434.30" width="1.8" height="1.6"/>
<rect x="772.0" y="434.30" width="1.8" height="1.6"/>
<rect x="756.2" y="437.15" width="1.8" height="1.6"/>
<rect x="772.0" y="437.15" width="1.8" height="1.6"/>
<rect x="756.2" y="440.00" width="1.8" height="1.6"/>
<rect x="772.0" y="440.00" width="1.8" height="1.6"/>
<rect x="756.2" y="442.85" width="1.8" height="1.6"/>
<rect x="772.0" y="442.85" width="1.8" height="1.6"/>
<rect x="756.2" y="445.70" width="1.8" height="1.6"/>
<rect x="772.0" y="445.70" width="1.8" height="1.6"/>
 </g>
</g>
<!-- Desktop content icon -->
<g>
 <ellipse cx="613" cy="366" rx="30" ry="2" fill="rgba(0,0,0,0.15)" filter="url(#blur1)"/>
 <path d="M586,314 H640 Q644,314 644,318 V361 Q644,365 640,365 H586 Q582,365 582,361 V318 Q582,314 586,314 Z" fill="url(#deskg)" stroke="#25508a" stroke-width="0.8"/>
 <path d="M586,314 H640 Q644,314 644,318 V322.7 H582 V318 Q582,314 586,314 Z" fill="#2a2a2a"/>
 <path d="M584,322 V317.5 Q584,315.3 586.5,315.3 H639.5 Q642,315.3 642,317.5 V322" fill="none" stroke="#6e6e6e" stroke-width="0.8"/>
 <line x1="582" y1="322.7" x2="644" y2="322.7" stroke="#000" stroke-width="1"/>
 <rect x="592" y="354.6" width="42" height="10.4" fill="#3b4d63" stroke="#93b7d3" stroke-width="0.8"/>
</g>
<!-- title bar buttons -->
<g fill="none" stroke="#ffffff" stroke-opacity="0.8" stroke-width="2">
 <path d="M979,224 H987"/>
 <path d="M1001,224 H1009 M1005,220 V228"/>
 <path d="M1023.5,220.5 L1030.5,227.5 M1030.5,220.5 L1023.5,227.5"/>
</g>
<g fill="none" stroke="#686868" stroke-width="2">
 <path d="M979,223 H987"/>
 <path d="M1001,223 H1009 M1005,219 V227"/>
 <path d="M1023.5,219.5 L1030.5,226.5 M1030.5,219.5 L1023.5,226.5"/>
</g>
<!-- window menu arrow -->
<path d="M411,221.3 H419 L415,225.8 Z" fill="#ffffff" transform="translate(0,1)" opacity="0.8"/>
<path d="M411,221.3 H419 L415,225.8 Z" fill="#767676"/>

<!-- toolbar -->
<g fill="none" stroke-linejoin="miter" stroke-linecap="butt">
 <g stroke="#3c3c3c">
  <path d="M421,271.2 L414.3,277.9 L421,284.6" stroke-width="4"/>
  <path d="M415,277.9 H426.8" stroke-width="3.5"/>
  <path d="M474.9,280.6 L482,273.5 L489.1,280.6" stroke-width="4"/>
  <path d="M482,274.5 V285.6" stroke-width="3.8"/>
 </g>
 <g stroke="#888888">
  <path d="M450.2,271.2 L456.9,277.9 L450.2,284.6" stroke-width="4"/>
  <path d="M444.3,277.9 H456" stroke-width="3.5"/>
 </g>
</g>
<path d="M513,270.2 L521.8,278.6 L520.4,280.1 L519,278.9 V285.6 H514.2 V280.8 H511.8 V285.6 H507 V278.9 L505.6,280.1 L504.2,278.6 Z" fill="#3c3c3c"/>
<path d="M517,271 H519.2 V274 L517,272 Z" fill="#3c3c3c"/>

<!-- location bar home icon -->
<g>
 <path d="M536.2,278.5 L542,273 L547.8,278.5 V285.6 H536.2 Z" fill="#efe2d3" stroke="#b49c82" stroke-width="0.9"/>
 <rect x="545.4" y="271.4" width="2.2" height="4.5" fill="#efe2d3" stroke="#b49c82" stroke-width="0.7"/>
 <path d="M534.9,278.6 L542,271.5 L549.1,278.6" fill="none" stroke="#6b1010" stroke-width="2"/>
 <path d="M540.2,285.6 V281.8 Q540.2,280.2 542,280.2 Q543.8,280.2 543.8,281.8 V285.6 Z" fill="#c97a3a"/>
</g>
<!-- reload -->
<g>
 <path d="M1028.6,279.6 A5,5 0 1 1 1025,273.1" fill="none" stroke="#555" stroke-width="2"/>
 <path d="M1024.3,269.9 L1029,272.9 L1024.3,276.1 Z" fill="#555"/>
</g>

<!-- panel: xubuntu logo -->
<circle cx="13" cy="12" r="8.1" fill="#0a4cbc"/>
<path d="M8.3,15.4 C8,13.2 8.2,11.6 8.5,10.6 L8.6,8.8 L9.7,10 L10.4,10.2 L11,7.9 L12,10.1 C14.2,10.2 16.6,10.9 18,13.2 C17.3,15 15,16.3 12,16.9 C10,17.2 8.6,16.8 8.3,15.4 Z" fill="#fff"/>
<path d="M14.4,10.6 L15.3,7.2 M15.6,10.9 L17.6,8.2" stroke="#fff" stroke-width="1" fill="none" opacity="0.9"/>
<!-- panel: taskbar home -->
<g>
 <path d="M40.2,12 L46,6.5 L51.8,12 V19.7 H40.2 Z" fill="#eee2d4" stroke="#8b6b4b" stroke-width="0.6"/>
 <rect x="49.2" y="5.2" width="2.5" height="4.8" fill="#eee2d4" stroke="#8b6b4b" stroke-width="0.5"/>
 <path d="M38.8,12.2 L46,5 L53.3,12.2" fill="none" stroke="#6a1212" stroke-width="2"/>
 <path d="M44.1,19.7 V15.8 Q44.1,14.2 46,14.2 Q47.9,14.2 47.9,15.8 V19.7 Z" fill="#c77a3c"/>
</g>

<!-- panel indicators -->
<g fill="#fff">
 <path d="M1265,4.8 Q1269.2,5 1269.4,10 L1269.8,13.5 Q1270.2,15.2 1271.2,16.6 H1258.8 Q1259.8,15.2 1260.2,13.5 L1260.6,10 Q1260.8,5 1265,4.8 Z"/>
 <ellipse cx="1265" cy="18.4" rx="2" ry="1"/>
</g>
<g fill="none" stroke="#fff" stroke-width="1.6">
 <path d="M1287,8 L1283.3,12 L1287,16"/>
 <path d="M1295,8 L1298.7,12 L1295,16"/>
</g>
<g fill="#bbb">
 <rect x="1288" y="11.2" width="1.2" height="1.6"/><rect x="1290.4" y="11.2" width="1.6" height="1.6"/><rect x="1293.2" y="11.2" width="1.2" height="1.6"/>
</g>
<circle cx="1316" cy="12" r="7.2" fill="#fff"/>
<path d="M1317.8,6.8 L1313.2,12.6 H1316.4 L1314.5,17.4 L1319,11.4 H1315.9 Z" fill="#26242d"/>
<path d="M1333.8,9.6 H1336 L1339,6.8 V17.2 L1336,14.3 H1333.8 Z" fill="#fff"/>
<g fill="none" stroke="#fff" stroke-width="1.3">
 <path d="M1341,9.5 Q1342.6,12 1341,14.5"/>
 <path d="M1343.4,7.5 Q1346.2,12 1343.4,16.5"/>
 <path d="M1346,5.3 Q1350.2,12 1346,18.7"/>
</g>

<!-- sidebar icons -->
<!-- HDD -->
<g>
 <path d="M419,328.3 H431 Q432.2,328.3 432.4,329.5 L433,340 V342.5 Q433,343.8 431.7,343.8 H418.3 Q417,343.8 417,342.5 V340 L417.6,329.5 Q417.8,328.3 419,328.3 Z" fill="#d6d6d6" stroke="#8e8e8e" stroke-width="0.6"/>
 <path d="M417,340 H433 V342.5 Q433,343.8 431.7,343.8 H418.3 Q417,343.8 417,342.5 Z" fill="#6a6a6a"/>
 <rect x="418.5" y="341" width="5" height="1.2" fill="#111"/>
 <ellipse cx="425" cy="335" rx="5" ry="3.2" fill="none" stroke="#b5b5b5" stroke-width="0.6"/>
</g>
<!-- Desktop small -->
<g>
 <rect x="417.1" y="402.1" width="15.9" height="13.8" rx="1.5" fill="#5a87b3" stroke="#2c5a90" stroke-width="0.6"/>
 <path d="M417.1,406.5 V403.6 Q417.1,402.1 418.6,402.1 H431.5 Q433,402.1 433,403.6 V406.5 Z" fill="#111"/>
 <rect x="420.2" y="411.6" width="9.6" height="4.3" fill="#2d3e52" stroke="#8fb3cf" stroke-width="0.5"/>
</g>
<!-- Trash small -->
<g>
 <path d="M419,427.5 L419.8,438 Q420,439.4 425,439.4 Q430,439.4 430.2,438 L431,427.5 Z" fill="url(#trashbody)" stroke="#777" stroke-width="0.5"/>
 <ellipse cx="425" cy="427.3" rx="6.6" ry="2.3" fill="#e6e6e6" stroke="#888" stroke-width="0.6"/>
 <path d="M423,425.8 V424.5 H427 V425.8" fill="none" stroke="#888" stroke-width="0.8"/>
</g>
<!-- Document small -->
<g>
 <path d="M419.5,447.3 H427.8 L430.5,450 V462.3 H419.5 Z" fill="#f2f2f2" stroke="#9a9a9a" stroke-width="0.9"/>
 <path d="M427.5,447.3 V450.3 H430.5" fill="#d8d8d8" stroke="#b0b0b0" stroke-width="0.6"/>
</g>
<!-- Music small -->
<g fill="#3b8bd6">
 <ellipse cx="419.3" cy="484" rx="2.4" ry="1.8"/>
 <ellipse cx="428" cy="482" rx="2.4" ry="1.8"/>
 <rect x="420.7" y="472.5" width="1.4" height="11.5"/>
 <rect x="429.3" y="470.6" width="1.4" height="11.4"/>
 <path d="M420.7,472.3 L430.7,470.2 V472.8 L420.7,474.9 Z"/>
</g>
<!-- Pictures small -->
<g>
 <rect x="417.5" y="494.8" width="15" height="12.5" fill="#f4f4f4" stroke="#999" stroke-width="0.8"/>
 <rect x="419" y="496.3" width="12" height="9.5" fill="#151515"/>
 <circle cx="425" cy="500.8" r="1.8" fill="none" stroke="#ddd" stroke-width="0.7"/>
 <path d="M421,504 L423.5,502" stroke="#bbb" stroke-width="0.6"/>
</g>
<!-- Videos small -->
<g>
 <rect x="418" y="516.8" width="14" height="15.2" fill="#333"/>
 <rect x="421" y="517.6" width="8" height="6.4" fill="url(#bluef)"/>
 <rect x="421" y="524.8" width="8" height="6.4" fill="url(#bluef)"/>
 <rect x="419" y="518.0" width="1" height="1" fill="#eee"/>
<rect x="430" y="518.0" width="1" height="1" fill="#eee"/>
<rect x="419" y="520.0" width="1" height="1" fill="#eee"/>
<rect x="430" y="520.0" width="1" height="1" fill="#eee"/>
<rect x="419" y="522.0" width="1" height="1" fill="#eee"/>
<rect x="430" y="522.0" width="1" height="1" fill="#eee"/>
<rect x="419" y="524.0" width="1" height="1" fill="#eee"/>
<rect x="430" y="524.0" width="1" height="1" fill="#eee"/>
<rect x="419" y="526.0" width="1" height="1" fill="#eee"/>
<rect x="430" y="526.0" width="1" height="1" fill="#eee"/>
<rect x="419" y="528.0" width="1" height="1" fill="#eee"/>
<rect x="430" y="528.0" width="1" height="1" fill="#eee"/>
<rect x="419" y="530.0" width="1" height="1" fill="#eee"/>
<rect x="430" y="530.0" width="1" height="1" fill="#eee"/>
</g>
<!-- Downloads small -->
<g>
 <circle cx="425" cy="546.8" r="7.8" fill="url(#greenc)" stroke="#4a8f24" stroke-width="0.6"/>
 <rect x="424.1" y="542" width="1.8" height="4.5" fill="#fff"/>
 <path d="M421,545.8 H429 L425,550.8 Z" fill="#fff"/>
</g>
<!-- Network small -->
<g fill="none" stroke="#3a8ad8" stroke-width="2" stroke-linecap="round">
 <path d="M418.3,594.6 Q425,588.6 431.7,594.6"/>
 <path d="M421,597.4 Q425,594 429,597.4"/>
</g>
<path d="M422.6,599.6 Q425,597.6 427.4,599.6 L425,603 Z" fill="#3a8ad8"/>
<!-- sidebar home -->
<g>
 <path d="M419.2,385.5 L425,380 L430.8,385.5 V393.6 H419.2 Z" fill="#efe2d3" stroke="#b49c82" stroke-width="0.9"/>
 <rect x="428.4" y="379.2" width="2.2" height="4.5" fill="#efe2d3" stroke="#b49c82" stroke-width="0.7"/>
 <path d="M417.9,386.2 L425,379 L432.1,386.2" fill="none" stroke="#6b1010" stroke-width="2"/>
 <path d="M423,393.6 V389.6 Q423,388 425,388 Q427,388 427,389.6 V393.6 Z" fill="#c97a3a"/>
</g>
</svg>
</body></html>
